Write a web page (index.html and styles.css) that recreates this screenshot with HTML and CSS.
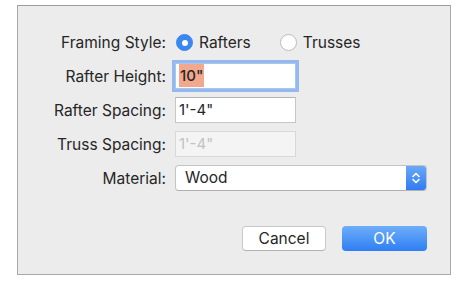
FILE: index.html
```html
<!DOCTYPE html>
<html lang="en">
<head>
    <meta charset="UTF-8">
    <title>Framing</title>
    <link rel="stylesheet" href="styles.css">
</head>
<body>
<div class="dialog">
    <div class="form">
        <div class="label">Framing Style:</div>
        <div class="radios">
            <span class="radio on"></span><span class="radio-text">Rafters</span>
            <span class="radio"></span><span class="radio-text">Trusses</span>
        </div>

        <div class="label">Rafter Height:</div>
        <div class="field focus"><span class="sel">10"</span></div>

        <div class="label">Rafter Spacing:</div>
        <div class="field">1'-4"</div>

        <div class="label">Truss Spacing:</div>
        <div class="field disabled">1'-4"</div>

        <div class="label">Material:</div>
        <div class="popup">
            <span class="popup-text">Wood</span>
            <span class="stepper">
                <svg width="10" height="14" viewBox="0 0 10 14">
                    <path d="M2 5.5 L5 2.5 L8 5.5 M2 8.5 L5 11.5 L8 8.5" fill="none" stroke="#fff" stroke-width="1.6" stroke-linecap="round" stroke-linejoin="round"/>
                </svg>
            </span>
        </div>
    </div>

    <!-- Buttons -->
    <div class="buttons">
        <button class="btn">Cancel</button>
        <button class="btn primary">OK</button>
    </div>
</div>
</body>
</html>
```

FILE: styles.css
```css
body {
    margin: 0;
    background: #fff;
    font-family: Inter, "Noto Sans", sans-serif;
    font-size: 15.5px;
    color: #262626;
}

.dialog {
    margin: 5px 0 0 17px;
    width: 432px;
    height: 268px;
    background: #ececec;
    border: 1px solid #a8a8a8;
    border-top-color: #9c9c9c;
    display: flex;
    flex-direction: column;
}

.form {
    display: grid;
    grid-template-columns: 148px 1fr;
    column-gap: 9px;
    row-gap: 8px;
    padding-top: 23px;
    grid-auto-rows: 26px;
}

.label {
    text-align: right;
    align-self: center;
}

.radios {
    display: flex;
    align-items: center;
}

.radio {
    width: 17px;
    height: 17px;
    box-sizing: border-box;
    border-radius: 50%;
    background: #fff;
    border: 1px solid #bcbcbc;
    margin-left: 1px;
    margin-right: 6px;
}

.radio.on {
    background: #3b87f0;
    border-color: #3b87f0;
    position: relative;
}

.radio.on::after {
    content: "";
    position: absolute;
    left: 5px;
    top: 5px;
    width: 6px;
    height: 6px;
    border-radius: 50%;
    background: #fff;
}

.radio-text {
    margin-right: 28px;
}

.field {
    width: 121px;
    box-sizing: border-box;
    background: #fff;
    border: 1px solid #c6c6c6;
    border-top-color: #b4b4b4;
    padding: 0 3px;
    line-height: 24px;
    font-size: 15px;
}

.field.focus {
    box-shadow: 0 0 0 3px #93b9ef;
    border-color: #a9c6f0;
}

.sel {
    background: #f2a88c;
    padding: 2px 1px;
    font-weight: 500;
}

.field.disabled {
    color: #c2c2c2;
    background: #f4f4f4;
    border-color: #d8d8d8;
}

.popup {
    width: 252px;
    box-sizing: border-box;
    display: flex;
    align-items: stretch;
    background: #fff;
    border: 1px solid #c4c4c4;
    border-bottom-color: #b0b0b0;
    border-radius: 4px;
    overflow: hidden;
}

.popup-text {
    flex: 1;
    padding-left: 9px;
    line-height: 24px;
}

.stepper {
    width: 20px;
    background: linear-gradient(#6aa8f8, #2f7cf2);
    display: flex;
    align-items: center;
    justify-content: center;
}

.buttons {
    display: flex;
    justify-content: flex-end;
    gap: 16px;
    padding-right: 23px;
    margin-top: 35px;
}

.btn {
    width: 84px;
    height: 25px;
    font-family: inherit;
    font-size: 15.5px;
    color: #262626;
    background: #fff;
    border: 1px solid #c8c8c8;
    border-bottom-color: #b2b2b2;
    border-radius: 4px;
    padding: 0;
}

.btn.primary {
    width: 85px;
    color: #fff;
    border: none;
    background: linear-gradient(#6eaef9, #2e7ef4);
}
```
